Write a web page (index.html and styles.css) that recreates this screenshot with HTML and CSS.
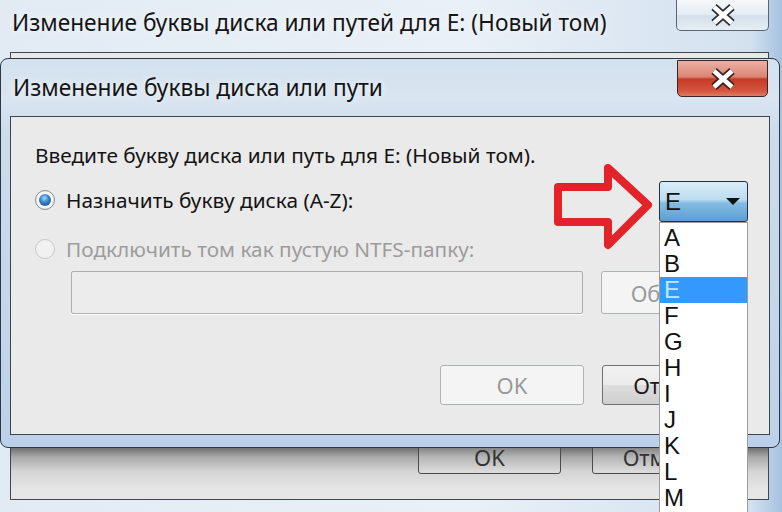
FILE: index.html
```html
<!DOCTYPE html>
<html lang="ru">

<head>
    <meta charset="UTF-8">
    <title>Изменение буквы диска или пути</title>
    <link rel="stylesheet" href="styles.css">
</head>

<body>
    <div class="desk">
        <!-- окно позади -->
        <div class="win-back">
            <div class="back-title">
                <span class="caption">Изменение буквы диска или путей для E: (Новый том)</span>
                <div class="close">
                    <svg width="26" height="22" viewBox="0 0 26 22">
                        <path d="M4 3 L22 19 M22 3 L4 19" stroke="#2b2f33" stroke-width="8" fill="none"/>
                        <path d="M4 3 L22 19 M22 3 L4 19" stroke="#ffffff" stroke-width="4.5" fill="none"/>
                    </svg>
                </div>
            </div>
            <div class="back-body">
                <div class="back-btn">OK</div>
                <div class="back-btn">Отмена</div>
            </div>
        </div>

        <!-- диалог -->
        <div class="win-front">
            <div class="front-title">
                <span class="caption">Изменение буквы диска или пути</span>
                <div class="close red">
                    <svg width="26" height="22" viewBox="0 0 26 22">
                        <path d="M4 3 L22 19 M22 3 L4 19" stroke="#3a2220" stroke-width="8" fill="none"/>
                        <path d="M4 3 L22 19 M22 3 L4 19" stroke="#ffffff" stroke-width="4.5" fill="none"/>
                    </svg>
                </div>
            </div>
            <div class="panel">
                <p class="prompt">Введите букву диска или путь для E: (Новый том).</p>
                <div class="opt">
                    <span class="radio on"></span>
                    <span class="label">Назначить букву диска (A-Z):</span>
                    <div class="combo">
                        <span>E</span>
                        <span class="caret"></span>
                        <ul class="droplist">
                            <li>A</li>
                            <li>B</li>
                            <li class="sel">E</li>
                            <li>F</li>
                            <li>G</li>
                            <li>H</li>
                            <li>I</li>
                            <li>J</li>
                            <li>K</li>
                            <li>L</li>
                            <li>M</li>
                        </ul>
                    </div>
                </div>
                <div class="opt off">
                    <span class="radio"></span>
                    <span class="label">Подключить том как пустую NTFS-папку:</span>
                </div>
                <div class="pathrow">
                    <div class="field"></div>
                    <div class="btn dis">Обзор...</div>
                </div>
                <div class="actions">
                    <div class="btn dis">OK</div>
                    <div class="btn">Отмена</div>
                </div>

                <!-- красная стрелка -->
                <svg class="arrow" width="112" height="98" viewBox="0 0 112 98">
                    <path d="M9 28 H59 V9 L99 46 L59 86 V63 H9 Z" fill="none" stroke="#e3232a" stroke-width="8"
                        stroke-linejoin="round"/>
                </svg>
            </div>
        </div>
    </div>
</body>

</html>
```

FILE: styles.css
```css
body {
    margin: 0;
    width: 782px;
    height: 512px;
    overflow: hidden;
    font-family: "Noto Sans", "Open Sans", sans-serif;
}

.desk {
    position: relative;
    width: 782px;
    height: 512px;
    overflow: hidden;
    background: linear-gradient(to right, #e2ebf4 0, #e9f0f7 60%, #d3e1ef 96%, #a6c2e0 100%);
}

.caption {
    font-size: 22.7px;
    color: #151515;
    text-shadow: 0 0 8px rgba(255, 255, 255, 0.9);
    white-space: nowrap;
}

.close {
    position: absolute;
    top: 0;
    right: 13px;
    width: 93px;
    height: 31px;
    box-sizing: border-box;
    border: 1px solid #5a6772;
    border-top: none;
    border-radius: 0 0 5px 5px;
    background: linear-gradient(#f5f8fb, #e3ebf3 50%, #d3dfea 52%, #e6eef5);
    display: flex;
    align-items: center;
    justify-content: center;
}

.close.red {
    top: 1px;
    right: 11px;
    width: 91px;
    height: 37px;
    border: 1px solid #3b2523;
    border-radius: 0 0 5px 5px;
    background: linear-gradient(#eab1a4, #dd8574 45%, #c63a26 52%, #d4553f 85%, #e07b62);
}

/* окно позади */

.win-back {
    height: 512px;
    display: flex;
    flex-direction: column;
}

.back-title {
    position: relative;
    height: 52px;
    flex: none;
}

.back-title .caption {
    display: block;
    margin: 7px 0 0 12px;
    line-height: 32px;
}

.back-body {
    flex: none;
    height: 448px;
    margin: 0 13px 0 10px;
    box-sizing: border-box;
    border: 1px solid #3e474f;
    background: linear-gradient(#e9e9e9 0, #e9e9e9 394px, #6f6f6f 395px, #a9a9a9 404px, #d4d4d4 418px, #e6e6e6 436px);
    display: flex;
    justify-content: flex-end;
    align-items: flex-end;
    gap: 31px;
    padding: 0 33px 25px 0;
}

.back-btn {
    width: 143px;
    height: 34px;
    box-sizing: border-box;
    border: 1px solid #4a4a4a;
    border-radius: 3px;
    background: rgba(255, 255, 255, 0.15);
    font-size: 22px;
    color: #333;
    display: flex;
    align-items: center;
    justify-content: center;
}

/* диалог */

.win-front {
    position: absolute;
    left: 0;
    top: 58px;
    width: 780px;
    height: 390px;
    box-sizing: border-box;
    border: 1px solid #2c3842;
    border-radius: 8px;
    background: linear-gradient(#d3e1ee 0, #d9e5f1 40px, #cddcec 70px, #bcd1e9 100%);
    display: flex;
    flex-direction: column;
}

.front-title {
    position: relative;
    height: 57px;
    flex: none;
    display: flex;
    align-items: center;
    padding-left: 12px;
}

.panel {
    position: relative;
    flex: none;
    height: 319px;
    margin: 0 9px;
    box-sizing: border-box;
    border: 1px solid #3b454e;
    background: #ebeaea;
    padding: 26px 22px 0 24px;
}

.prompt {
    margin: 0;
    font-size: 20.8px;
    line-height: 24px;
    color: #141414;
}

.opt {
    display: flex;
    align-items: center;
    height: 40px;
    margin-top: 13px;
    font-size: 20.8px;
    color: #141414;
}

.opt.off {
    height: 38px;
    margin-top: 10px;
    color: #9c9c9c;
}

.radio {
    position: relative;
    width: 20px;
    height: 20px;
    flex: none;
    box-sizing: border-box;
    border: 1px solid #8a8c8e;
    border-radius: 50%;
    background: radial-gradient(circle, #ffffff 40%, #dcdcdc);
}

.radio.on::after {
    content: "";
    position: absolute;
    left: 3px;
    top: 3px;
    width: 12px;
    height: 12px;
    border-radius: 50%;
    background: radial-gradient(circle at 45% 35%, #a9d8ff 0, #3a86cc 40%, #123f70 100%);
}

.off .radio {
    border-color: #c9c9c9;
    background: #f1f1f1;
}

.label {
    margin-left: 11px;
}

.combo {
    position: relative;
    margin-left: auto;
    margin-right: -1px;
    align-self: flex-start;
    margin-top: 1px;
    width: 89px;
    height: 41px;
    box-sizing: border-box;
    border: 1px solid #25313b;
    border-radius: 3px;
    background: linear-gradient(#d9ecf8, #bcdcf1 45%, #82bbe3 55%, #5c9fd2);
    display: flex;
    align-items: center;
    padding-left: 5px;
    font-family: "Liberation Sans", Arial, sans-serif;
    font-size: 24px;
    color: #111;
}

.caret {
    margin-left: auto;
    margin-right: 7px;
    width: 0;
    height: 0;
    border-left: 7px solid transparent;
    border-right: 7px solid transparent;
    border-top: 7px solid #111;
}

.droplist {
    position: absolute;
    left: -1px;
    top: 40px;
    width: 89px;
    height: 300px;
    box-sizing: border-box;
    margin: 0;
    padding: 2px 0 0;
    list-style: none;
    background: #ffffff;
    border: 1px solid #9c9c9c;
    z-index: 2;
}

.droplist li {
    height: 26px;
    line-height: 26px;
    padding-left: 4px;
    font-size: 24px;
    color: #111;
}

.droplist li.sel {
    background: #3399ff;
    color: #b8ecff;
}

.pathrow {
    display: flex;
    gap: 18px;
    margin-top: 3px;
    padding-left: 36px;
}

.field {
    width: 512px;
    height: 43px;
    box-sizing: border-box;
    border: 1px solid #aeaeae;
    border-radius: 2px;
    background: #ececec;
    box-shadow: 0 1px 0 #ffffff;
}

.btn {
    width: 144px;
    height: 40px;
    box-sizing: border-box;
    border: 1px solid #707070;
    border-radius: 3px;
    background: linear-gradient(#f2f2f2, #ebebeb 50%, #dddddd 51%, #cfcfcf);
    font-size: 22px;
    color: #1a1a1a;
    display: flex;
    align-items: center;
    justify-content: center;
}

.pathrow .btn {
    height: 43px;
}

.btn.dis {
    border-color: #adb2b5;
    background: #f4f4f4;
    color: #9a9a9a;
}

.actions {
    display: flex;
    justify-content: flex-end;
    gap: 18px;
    margin-top: 51px;
    margin-right: 1px;
}

.arrow {
    position: absolute;
    left: 538px;
    top: 42px;
}
```
